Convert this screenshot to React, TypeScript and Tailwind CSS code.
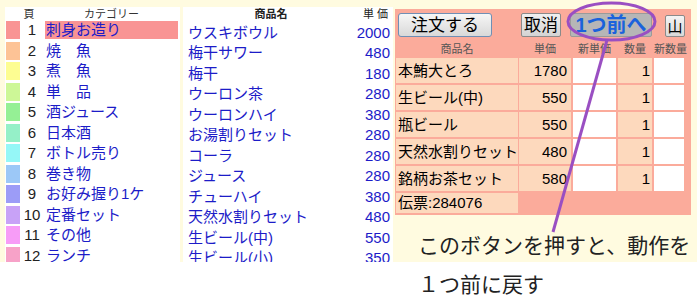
const categories = [
  { no: 1, name: '刺身お造り', swatch: 'bg-[#f99494]' },
  { no: 2, name: '焼　魚', swatch: 'bg-[#fdc396]' },
  { no: 3, name: '煮　魚', swatch: 'bg-[#fdfd92]' },
  { no: 4, name: '単　品', swatch: 'bg-[#cdf797]' },
  { no: 5, name: '酒ジュース', swatch: 'bg-[#95f095]' },
  { no: 6, name: '日本酒', swatch: 'bg-[#95f0c8]' },
  { no: 7, name: 'ボトル売り', swatch: 'bg-[#95f7f7]' },
  { no: 8, name: '巻き物', swatch: 'bg-[#9cc8f7]' },
  { no: 9, name: 'お好み握り1ケ', swatch: 'bg-[#9c9cf7]' },
  { no: 10, name: '定番セット', swatch: 'bg-[#c8a2f7]' },
  { no: 11, name: 'その他', swatch: 'bg-[#f79cf7]' },
  { no: 12, name: 'ランチ', swatch: 'bg-[#f7a2c8]' },
]

const items = [
  ['ウスキボウル', 2000],
  ['梅干サワー', 480],
  ['梅干', 180],
  ['ウーロン茶', 280],
  ['ウーロンハイ', 380],
  ['お湯割りセット', 280],
  ['コーラ', 280],
  ['ジュース', 280],
  ['チューハイ', 380],
  ['天然水割りセット', 480],
  ['生ビール(中)', 550],
  ['生ビール(小)', 350],
] as const

const orders = [
  { name: '本鮪大とろ', price: 1780, qty: 1 },
  { name: '生ビール(中)', price: 550, qty: 1 },
  { name: '瓶ビール', price: 550, qty: 1 },
  { name: '天然水割りセット', price: 480, qty: 1 },
  { name: '銘柄お茶セット', price: 580, qty: 1 },
]

function CategoryPanel() {
  return (
    <div className="w-[175px] h-full bg-white overflow-hidden shrink-0">
      <div className="flex h-[14px] items-center text-[11px] leading-none text-[#333]">
        <span className="ml-[14px] w-[20px] text-center">頁</span>
        <span className="ml-[6px] w-[133px] text-center">カテゴリー</span>
      </div>
      {categories.map((c) => (
        <div key={c.no} className="flex h-[20.5px] items-start">
          <div className={`ml-[1px] w-[14px] h-[18px] ${c.swatch}`} />
          <span className="ml-[2px] w-[20px] text-center text-[15px] leading-[18px] text-[#222]">{c.no}</span>
          <span
            className={`ml-[3px] w-[133px] h-[18px] pl-[1px] text-[15px] leading-[18px] text-[#1c1cc8] whitespace-nowrap ${
              c.no === 1 ? 'bg-[#f99494]' : ''
            }`}
          >
            {c.name}
          </span>
        </div>
      ))}
    </div>
  )
}

function ItemPanel() {
  return (
    <div className="ml-[3px] w-[210px] h-full bg-white overflow-hidden shrink-0">
      <div className="flex h-[15px] items-center text-[11px] leading-none text-[#222]">
        <span className="w-[176px] text-center font-bold">商品名</span>
        <span className="flex-1 text-right pr-[5px]">単 価</span>
      </div>
      {items.map(([name, price]) => (
        <div key={name} className="flex h-[20.5px] items-center text-[15px] leading-none text-[#1c1cc8]">
          <span className="flex-1 pl-[5px] whitespace-nowrap">{name}</span>
          <span className="pr-[3px]">{price}</span>
        </div>
      ))}
    </div>
  )
}

function OrderPanel() {
  return (
    <div className="mt-[2px] w-[296px] bg-[#fbab9b] pl-[1px] pb-[2px]">
      <div className="flex h-[24px] mt-[4px] items-start">
        <button className="ml-[2px] w-[94px] h-[24px] rounded-[3px] border border-[#6f8fb5] bg-gradient-to-b from-[#f6f6f6] to-[#d9d9d9] text-[17px] leading-none text-black">
          注文する
        </button>
        <button className="ml-[29px] w-[40px] h-[24px] rounded-[2px] border border-[#8a8a8a] bg-gradient-to-b from-[#f0f0f0] to-[#d4d4d4] text-[17px] leading-none text-black">
          取消
        </button>
        <button className="ml-[9px] w-[82px] h-[24px] rounded-[2px] border border-[#9a9a9a] bg-[#b6b6b6] text-[20px] font-bold leading-none text-[#1a62dc] whitespace-nowrap">
          1つ前へ
        </button>
        <button className="ml-[13px] mt-[2px] w-[20px] h-[22px] rounded-[2px] border border-[#8a8a8a] bg-gradient-to-b from-[#f4f4f4] to-[#d8d8d8] text-[15px] leading-none text-black">
          山
        </button>
      </div>
      <div className="flex h-[20px] items-end pb-[1px] text-[11px] leading-[14px] text-[#555]">
        <span className="w-[122px] text-center">商品名</span>
        <span className="ml-[1px] w-[52px] text-center">単価</span>
        <span className="ml-[2px] w-[43px] text-center">新単価</span>
        <span className="ml-[2px] w-[34px] text-center">数量</span>
        <span className="ml-[2px] w-[30px] text-center whitespace-nowrap">新数量</span>
      </div>
      <div className="mt-[1px] flex flex-col gap-[2px]">
        {orders.map((o) => (
          <div key={o.name} className="flex h-[25px] text-[15px] leading-[25px] text-black">
            <span className="w-[122px] bg-[#fdd9bd] pl-[2px] whitespace-nowrap overflow-hidden">{o.name}</span>
            <span className="ml-[1px] w-[52px] bg-[#fdd9bd] pr-[4px] text-right">{o.price}</span>
            <span className="ml-[2px] w-[43px] bg-white" />
            <span className="ml-[2px] w-[34px] bg-[#fdd9bd] pr-[2px] text-right">{o.qty}</span>
            <span className="ml-[2px] w-[30px] bg-white" />
          </div>
        ))}
        <div className="flex h-[20px] text-[15px] leading-[20px] text-black">
          <span className="w-[122px] bg-[#fdd9bd] pl-[2px]">伝票:284076</span>
        </div>
      </div>
    </div>
  )
}

export default function App() {
  return (
    <div className="relative w-[697px] h-[305px] bg-white overflow-hidden font-['Liberation_Sans','Noto_Sans_CJK_JP',sans-serif]">
      <div className="flex h-[262px] bg-[#fffbe0] pl-[5px] pt-[7px]">
        <CategoryPanel />
        <ItemPanel />
        <div className="ml-[2px] flex flex-col">
          <OrderPanel />
          <p className="ml-[23px] mt-[16px] text-[21px] leading-[30px] text-[#222] whitespace-nowrap">
            このボタンを押すと、動作を
          </p>
        </div>
      </div>
      <p className="pl-[418px] mt-[8px] text-[21px] leading-[30px] text-[#222]">１つ前に戻す</p>

      <svg className="absolute inset-0 pointer-events-none" width="697" height="305">
        <ellipse cx="611.5" cy="21.5" rx="43.5" ry="18.5" fill="none" stroke="#9a4fc2" strokeWidth="3" />
        <line x1="607" y1="40" x2="553" y2="232" stroke="#9a4fc2" strokeWidth="3" />
      </svg>
    </div>
  )
}
